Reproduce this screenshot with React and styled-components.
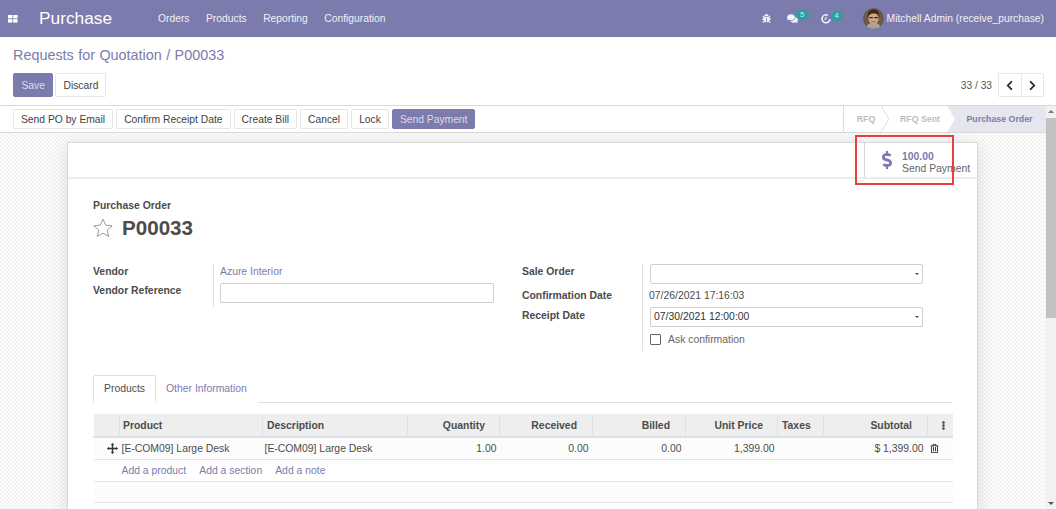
import React from "react";
import styled, { createGlobalStyle } from "styled-components";
import { FaBug, FaComments, FaChevronLeft, FaChevronRight, FaDollarSign, FaEllipsisV, FaRegTrashAlt } from "react-icons/fa";

const Global = createGlobalStyle`
  html, body { margin: 0; padding: 0; height: 100%; overflow: hidden; }
  body { font-family: "Liberation Sans", Arial, sans-serif; font-size: 10.4px; color: #4c4c4c; background: #fff; }
  #root { height: 509px; }
  * { box-sizing: border-box; }
`;

const Page = styled.div`
  position: relative;
  width: 1056px;
  height: 509px;
  display: flex;
  flex-direction: column;
  overflow: hidden;
`;

const Navbar = styled.header`
  flex: 0 0 37px;
  background: #7c7bad;
  color: #fff;
  display: flex;
  align-items: center;
  padding-left: 8px;
`;
const AppsIcon = styled.svg`
  width: 10px;
  height: 10px;
  margin-right: 21px;
  fill: #fff;
`;
const Brand = styled.span`
  font-size: 17.3px;
  line-height: 37px;
  margin-right: 46px;
`;
const Menu = styled.nav`
  display: flex;
  gap: 16.5px;
  font-size: 10.3px;
  color: #f0f0f6;
`;
const NavRight = styled.div`
  margin-left: auto;
  display: flex;
  align-items: center;
  padding-right: 12px;
`;
const NavIconWrap = styled.span`
  position: relative;
  display: inline-flex;
  align-items: center;
  color: #f4f4f8;
  margin-right: ${(p) => p.$mr}px;
`;
const Badge = styled.span`
  position: absolute;
  left: ${(p) => p.$left}px;
  top: -3px;
  width: ${(p) => p.$w}px;
  height: 10px;
  border-radius: 5px;
  background: #2f9e9e;
  color: #d6eeee;
  font-size: 7.5px;
  line-height: 10px;
  text-align: center;
`;
const Avatar = styled.svg`
  width: 21px;
  height: 21px;
  margin-right: 3px;
  border-radius: 50%;
`;
const UserName = styled.span`
  font-size: 10.3px;
  color: #f0f0f6;
`;

const ControlPanel = styled.section`
  flex: 0 0 68px;
  padding: 9px 12px 0 13px;
  background: #fff;
`;
const Breadcrumb = styled.div`
  font-size: 14.4px;
  line-height: 18px;
  color: #7c7bad;
  word-spacing: 0.4px;
`;
const CpRow = styled.div`
  display: flex;
  justify-content: space-between;
  align-items: center;
  margin-top: 9px;
`;
const Group = styled.div`
  display: flex;
  align-items: center;
  gap: ${(p) => p.$gap ?? 2}px;
`;
const Button = styled.button`
  font: inherit;
  font-size: 10.3px;
  height: ${(p) => p.$h ?? 24}px;
  padding: 0 ${(p) => p.$px ?? 7}px;
  border-radius: 2px;
  border: 1px solid ${(p) => (p.$primary ? "#7c7bad" : "#e6e6e6")};
  background: ${(p) => (p.$primary ? "#7c7bad" : "#fff")};
  color: ${(p) => (p.$primary ? "#dcdce9" : "#3f3f3f")};
  white-space: nowrap;
`;
const PagerText = styled.span`
  font-size: 10.2px;
  color: #555;
  margin-right: 6px;
`;
const Pager = styled.div`
  display: flex;
  width: 46px;
  height: 24px;
  border: 1px solid #e6e6e6;
  border-radius: 2px;
`;
const PagerBtn = styled.span`
  flex: 1;
  display: flex;
  align-items: center;
  justify-content: center;
  color: #212529;
  & + & { border-left: 1px solid #e6e6e6; }
`;

const Body = styled.div`
  flex: 1;
  display: flex;
  min-height: 0;
`;
const MainColumn = styled.div`
  flex: 1;
  min-width: 0;
  display: flex;
  flex-direction: column;
`;
const StatusBar = styled.section`
  flex: 0 0 28px;
  display: flex;
  justify-content: space-between;
  align-items: center;
  padding-left: 13px;
  background: #fff;
  border-top: 1px solid #d9d9d9;
  border-bottom: 1px solid #d9d9d9;
`;
const Stages = styled.div`
  display: flex;
  height: 100%;
  border-left: 1px solid #dcdcdc;
`;
const Stage = styled.span`
  display: flex;
  align-items: center;
  justify-content: center;
  height: 100%;
  width: ${(p) => p.$w}px;
  padding-left: ${(p) => p.$pl ?? 0}px;
  font-size: 8.8px;
  font-weight: 700;
  color: ${(p) => (p.$active ? "#7c7bad" : "#bdbdbd")};
  background: ${(p) => (p.$active ? "#e6e6ee" : "transparent")};
  clip-path: ${(p) =>
    p.$active ? "polygon(0 0, 100% 0, 100% 100%, 0 100%, 8px 50%)" : "none"};
`;
const Chevron = styled.svg`
  flex: 0 0 8px;
  width: 8px;
  height: 100%;
  fill: none;
  stroke: #dcdcdc;
`;

const Scroller = styled.main`
  flex: 1;
  min-height: 0;
  overflow: hidden;
  padding: 9px 68px 0 67px;
  background-color: #f3f3f3;
  background-image:
    linear-gradient(45deg, #fcfcfc 25%, transparent 25%, transparent 75%, #fcfcfc 75%),
    linear-gradient(45deg, #fcfcfc 25%, transparent 25%, transparent 75%, #fcfcfc 75%);
  background-size: 4px 4px;
  background-position: 0 0, 2px 2px;
`;
const Sheet = styled.article`
  background: #fff;
  border: 1px solid #d9d9d9;
  box-shadow: 0 4px 16px rgba(0, 0, 0, 0.12);
  height: 420px;
`;
const ButtonBox = styled.div`
  height: 36px;
  border-bottom: 2px solid #ececec;
  display: flex;
  justify-content: flex-end;
`;
const StatButton = styled.div`
  width: 113px;
  border-left: 1px solid #d6d6d6;
  display: flex;
  align-items: center;
  padding-left: 13px;
  color: #7c7bad;
`;
const StatText = styled.div`
  margin-left: 6px;
  padding-top: 6px;
  font-size: 10.4px;
  line-height: 12px;
  color: #666;
  white-space: nowrap;
`;
const StatValue = styled.div`
  font-weight: 700;
  color: #7c7bad;
`;

const SheetBody = styled.div`
  padding: 20px 25px 0 25px;
`;
const OrderLabel = styled.div`
  font-size: 10.4px;
  font-weight: 700;
  line-height: 13px;
  color: #4c4c4c;
`;
const TitleRow = styled.div`
  display: flex;
  align-items: center;
  gap: 9px;
  margin-top: 2px;
`;
const StarIcon = styled.svg`
  width: 20px;
  height: 20px;
  fill: none;
  stroke: #9a9a9a;
  stroke-width: 1;
`;
const Title = styled.h1`
  margin: 0;
  font-size: 20.6px;
  font-weight: 700;
  line-height: 27px;
  color: #4c4c4c;
`;
const Columns = styled.div`
  display: flex;
  margin-top: 23px;
`;
const Col = styled.div`
  display: grid;
  grid-template-columns: ${(p) => p.$label}px ${(p) => p.$field}px;
  align-content: start;
`;
const Label = styled.div`
  font-size: 10.4px;
  font-weight: 700;
  color: #4c4c4c;
  height: ${(p) => p.$h}px;
  line-height: 13px;
  padding-top: ${(p) => p.$pt ?? 0}px;
`;
const Field = styled.div`
  border-left: 1px solid #e0e0e0;
  padding-left: ${(p) => p.$pl ?? 6}px;
  height: ${(p) => p.$h}px;
  padding-top: ${(p) => p.$pt ?? 0}px;
  font-size: 10.4px;
  line-height: 13px;
  color: ${(p) => p.$color ?? "#4c4c4c"};
`;
const Input = styled.div`
  width: ${(p) => p.$w}px;
  height: 20px;
  border: 1px solid #cfcfcf;
  border-radius: 2px;
  background: #fff;
  color: #333;
  font-size: 10.4px;
  line-height: 18px;
  padding-left: 3px;
  position: relative;
`;
const Caret = styled.i`
  position: absolute;
  right: 3px;
  top: 8px;
  border-left: 2.5px solid transparent;
  border-right: 2.5px solid transparent;
  border-top: 2.5px solid #444;
`;
const CheckRow = styled.div`
  display: flex;
  align-items: center;
  gap: 7px;
  color: #666;
`;
const CheckBox = styled.i`
  width: 11px;
  height: 11px;
  border: 1px solid #666;
  border-radius: 1px;
  display: block;
`;

const Tabs = styled.div`
  display: flex;
  align-items: flex-end;
  height: 28px;
  margin-top: 24px;
  border-bottom: 1px solid #e0e0e0;
  font-size: 10.4px;
`;
const Tab = styled.div`
  height: 28px;
  line-height: 26px;
  padding: 0 10px;
  color: ${(p) => (p.$active ? "#4c4c4c" : "#7c7bad")};
  border: 1px solid ${(p) => (p.$active ? "#e0e0e0" : "transparent")};
  border-bottom-color: ${(p) => (p.$active ? "#fff" : "transparent")};
  border-radius: 2px 2px 0 0;
  margin-bottom: -1px;
  background: #fff;
  & + & { padding-left: 9px; }
`;
const Table = styled.table`
  width: 859px;
  margin-top: 11px;
  border-collapse: collapse;
  table-layout: fixed;
  font-size: 10.4px;
`;
const Th = styled.th`
  height: 23px;
  padding: 1px ${(p) => p.$pr ?? 5}px 0 ${(p) => p.$pl ?? 4}px;
  background: #eeeeee;
  border-bottom: 2px solid #dee2e6;
  border-left: 1px solid ${(p) => (p.$noLine ? "transparent" : "#e2e2e2")};
  font-weight: 700;
  color: #4c4c4c;
  text-align: ${(p) => (p.$right ? "right" : "left")};
  white-space: nowrap;
`;
const Td = styled.td`
  height: ${(p) => p.$h ?? 22}px;
  padding: 0 ${(p) => p.$pr ?? 3}px 0 2px;
  background: ${(p) => (p.$plain ? "#fff" : "#fcfcfc")};
  border-bottom: 1px solid #e4e4e4;
  color: #4c4c4c;
  text-align: ${(p) => (p.$right ? "right" : "left")};
  white-space: nowrap;
`;
const HandleCell = styled(Td)`
  padding: 0 0 0 13px;
  svg { display: block; width: 11px; height: 11px; fill: #333; }
`;
const TrashCell = styled(Td)`
  padding: 0 0 0 2px;
  svg { display: block; color: #222; }
`;
const AddLinks = styled.div`
  display: flex;
  gap: 13px;
  color: #7c7bad;
`;
const DotsWrap = styled.span`
  display: flex;
  justify-content: flex-end;
  color: #444;
`;

const ScrollBar = styled.aside`
  flex: 0 0 10px;
  background: #f1f1f1;
  border-top: 1px solid #d9d9d9;
  display: flex;
  flex-direction: column;
`;
const ScrollThumb = styled.div`
  flex: 0 0 200px;
  background: #c1c1c1;
  margin-bottom: auto;
`;
const ScrollArrow = styled.i`
  display: block;
  width: 0;
  margin: ${(p) => (p.$up ? "4px auto 5px" : "0 auto 4px")};
  border-left: 3px solid transparent;
  border-right: 3px solid transparent;
  ${(p) => (p.$up ? "border-bottom: 3px solid #777;" : "border-top: 3px solid #555;")}
`;

const Highlight = styled.div`
  position: absolute;
  left: 855px;
  top: 135px;
  width: 99px;
  height: 50px;
  border: 2px solid #e8403f;
  pointer-events: none;
`;

const cols = [26, 143, 145, 92, 93, 93, 92, 46, 104, 25];
const AddRowCells = 9;

export default function App() {
  return (
    <Page>
      <Global />
      <Navbar>
        <AppsIcon viewBox="0 0 10 10">
          <rect x="0" y="1" width="4.4" height="3.4" />
          <rect x="5.2" y="1" width="4.4" height="3.4" />
          <rect x="0" y="5.2" width="4.4" height="3.4" />
          <rect x="5.2" y="5.2" width="4.4" height="3.4" />
        </AppsIcon>
        <Brand>Purchase</Brand>
        <Menu>
          <span>Orders</span>
          <span>Products</span>
          <span>Reporting</span>
          <span>Configuration</span>
        </Menu>
        <NavRight>
          <NavIconWrap $mr={16}>
            <FaBug size={9} />
          </NavIconWrap>
          <NavIconWrap $mr={23}>
            <FaComments size={11} />
            <Badge $left={9} $w={13}>5</Badge>
          </NavIconWrap>
          <NavIconWrap $mr={32}>
            <svg width="10" height="10" viewBox="0 0 11 11" fill="none" stroke="#f4f4f8" strokeWidth="1.7">
              <path d="M7.5 1.4A4.4 4.4 0 1 0 9.9 5.5" />
              <path d="M5.5 3.200v2.500H3.600" strokeWidth="1.1" />
            </svg>
            <Badge $left={10} $w={12}>4</Badge>
          </NavIconWrap>
          <Avatar viewBox="0 0 20 20">
            <rect width="20" height="20" fill="#6b5a48" />
            <path d="M3 20c0-4 3-6 7-6s7 2 7 6z" fill="#a9a492" />
            <ellipse cx="10" cy="10" rx="4.800" ry="5.800" fill="#cfa488" />
            <path d="M4.500 9C4 3.500 7 1.500 10.500 1.500S16 4 15.500 9c-.6-2.500-1.600-3.600-5.500-3.800C7 5.200 5.400 6.500 4.500 9z" fill="#3f2a1e" />
            <path d="M6 9.200h3.400M10.800 9.200h3.400" stroke="#33241b" strokeWidth="1.100" />
            <path d="M8 13.200h4" stroke="#8a5a48" strokeWidth="0.800" />
          </Avatar>
          <UserName>Mitchell Admin (receive_purchase)</UserName>
        </NavRight>
      </Navbar>

      <ControlPanel>
        <Breadcrumb>Requests for Quotation / P00033</Breadcrumb>
        <CpRow>
          <Group>
            <Button $primary $px={7.5}>Save</Button>
            <Button>Discard</Button>
          </Group>
          <Group $gap={0}>
            <PagerText>33 / 33</PagerText>
            <Pager>
              <PagerBtn><FaChevronLeft size={11} /></PagerBtn>
              <PagerBtn><FaChevronRight size={11} /></PagerBtn>
            </Pager>
          </Group>
        </CpRow>
      </ControlPanel>

      <Body>
        <MainColumn>
          <StatusBar>
            <Group $gap={3}>
              <Button $h={20}>Send PO by Email</Button>
              <Button $h={20}>Confirm Receipt Date</Button>
              <Button $h={20}>Create Bill</Button>
              <Button $h={20}>Cancel</Button>
              <Button $h={20}>Lock</Button>
              <Button $h={20} $primary>Send Payment</Button>
            </Group>
            <Stages>
              <Stage $w={37} $pl={7}>RFQ</Stage>
              <Chevron viewBox="0 0 8 26" preserveAspectRatio="none">
                <path d="M0 0 8 13 0 26" />
              </Chevron>
              <Stage $w={58} $pl={4}>RFQ Sent</Stage>
              <Stage $w={99} $pl={6} $active>Purchase Order</Stage>
            </Stages>
          </StatusBar>
          <Scroller>
            <Sheet>
              <ButtonBox>
                <StatButton>
                  <FaDollarSign size={18} />
                  <StatText>
                    <StatValue>100.00</StatValue>
                    Send Payment
                  </StatText>
                </StatButton>
              </ButtonBox>
              <SheetBody>
                <OrderLabel>Purchase Order</OrderLabel>
                <TitleRow>
                  <StarIcon viewBox="2 2 20 20">
                    <path d="M12 3.200l2.700 5.900 6.400.7-4.800 4.300 1.400 6.400L12 17.200l-5.700 3.300 1.400-6.400-4.800-4.300 6.400-.7z" />
                  </StarIcon>
                  <Title>P00033</Title>
                </TitleRow>
                <Columns>
                  <Col $label={120} $field={309}>
                    <Label $h={19} $pt={1}>Vendor</Label>
                    <Field $h={19} $pt={1} $color="#7c7bad">Azure Interior</Field>
                    <Label $h={24} $pt={1}>Vendor Reference</Label>
                    <Field $h={24}><Input $w={274} /></Field>
                  </Col>
                  <Col $label={120} $field={290}>
                    <Label $h={24} $pt={1}>Sale Order</Label>
                    <Field $h={24} $pl={7}><Input $w={273}><Caret /></Input></Field>
                    <Label $h={19} $pt={1}>Confirmation Date</Label>
                    <Field $h={19} $pl={6} $pt={1}>07/26/2021 17:16:03</Field>
                    <Label $h={24} $pt={2}>Receipt Date</Label>
                    <Field $h={24} $pl={7}><Input $w={273}>07/30/2021 12:00:00<Caret /></Input></Field>
                    <Label $h={20} />
                    <Field $h={20} $pl={7} $pt={2}>
                      <CheckRow><CheckBox />Ask confirmation</CheckRow>
                    </Field>
                  </Col>
                </Columns>
                <Tabs>
                  <Tab $active>Products</Tab>
                  <Tab>Other Information</Tab>
                </Tabs>
                <Table>
                  <colgroup>
                    {cols.map((w, i) => <col key={i} width={w} />)}
                  </colgroup>
                  <thead>
                    <tr>
                      <Th $noLine />
                      <Th $pl={3}>Product</Th>
                      <Th>Description</Th>
                      <Th $right $pr={14}>Quantity</Th>
                      <Th $right $pr={15}>Received</Th>
                      <Th $right $pr={15}>Billed</Th>
                      <Th $right $pr={14}>Unit Price</Th>
                      <Th>Taxes</Th>
                      <Th $right $pr={15}>Subtotal</Th>
                      <Th $pr={5}><DotsWrap><FaEllipsisV size={9} /></DotsWrap></Th>
                    </tr>
                  </thead>
                  <tbody>
                    <tr>
                      <HandleCell>
                        <svg viewBox="0 0 12 12">
                          <path d="M6 0l2 2.200H6.800v3h3V4L12 6 9.800 8V6.800h-3v3H8L6 12 4 9.800h1.200v-3h-3V8L0 6l2.200-2v1.200h3v-3H4z" />
                        </svg>
                      </HandleCell>
                      <Td>[E-COM09] Large Desk</Td>
                      <Td>[E-COM09] Large Desk</Td>
                      <Td $right>1.00</Td>
                      <Td $right $pr={4}>0.00</Td>
                      <Td $right $pr={4}>0.00</Td>
                      <Td $right>1,399.00</Td>
                      <Td />
                      <Td $right $pr={4}>$ 1,399.00</Td>
                      <TrashCell><FaRegTrashAlt size={9} /></TrashCell>
                    </tr>
                    <tr>
                      <Td $plain />
                      <Td $plain colSpan={AddRowCells}>
                        <AddLinks>
                          <span>Add a product</span>
                          <span>Add a section</span>
                          <span>Add a note</span>
                        </AddLinks>
                      </Td>
                    </tr>
                    <tr>
                      <Td $h={21} colSpan={AddRowCells + 1} />
                    </tr>
                  </tbody>
                </Table>
              </SheetBody>
            </Sheet>
          </Scroller>
        </MainColumn>
        <ScrollBar>
          <ScrollArrow $up />
          <ScrollThumb />
          <ScrollArrow />
        </ScrollBar>
      </Body>
      <Highlight />
    </Page>
  );
}
